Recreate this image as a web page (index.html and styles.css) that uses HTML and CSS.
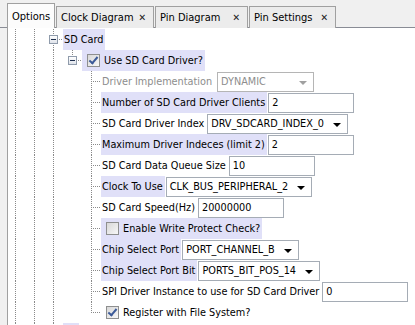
FILE: index.html
```html
<!DOCTYPE html>
<html lang="en">
<head>
    <meta charset="UTF-8">
    <meta name="viewport" content="width=device-width, initial-scale=1.0">
    <title>Options</title>
    <link rel="stylesheet" href="styles.css">
</head>
<body>
    <div id="main">
        <div class="tabs">
            <div class="tab active">Options</div>
            <div class="tab t-clock">Clock Diagram <span class="close">&#x2715;</span></div>
            <div class="tab t-pin">Pin Diagram <span class="close">&#x2715;</span></div>
            <div class="tab t-set">Pin Settings <span class="close">&#x2715;</span></div>
        </div>

        <div class="panel">
            <div class="tree">
                <!-- SD Card node -->
                <div class="row">
                    <span class="g v"></span><span class="g v"></span>
                    <span class="g exp"><i class="box"></i></span>
                    <span class="label hl">SD Card</span>
                </div>

                <!-- Use SD Card Driver -->
                <div class="row">
                    <span class="g v"></span><span class="g v"></span><span class="g v"></span>
                    <span class="g exp last"><i class="box"></i></span>
                    <span class="label hl check"><i class="cb on"></i>Use SD Card Driver?</span>
                </div>

                <div class="row">
                    <span class="g v"></span><span class="g v"></span><span class="g v"></span><span class="g"></span><span class="g t"></span>
                    <span class="label dim">Driver Implementation</span>
                    <div class="combo disabled w-impl">DYNAMIC</div>
                </div>

                <div class="row">
                    <span class="g v"></span><span class="g v"></span><span class="g v"></span><span class="g"></span><span class="g t"></span>
                    <span class="label hl">Number of SD Card Driver Clients</span>
                    <div class="field">2</div>
                </div>

                <div class="row">
                    <span class="g v"></span><span class="g v"></span><span class="g v"></span><span class="g"></span><span class="g t"></span>
                    <span class="label">SD Card Driver Index</span>
                    <div class="combo">DRV_SDCARD_INDEX_0</div>
                </div>

                <div class="row">
                    <span class="g v"></span><span class="g v"></span><span class="g v"></span><span class="g"></span><span class="g t"></span>
                    <span class="label hl">Maximum Driver Indeces (limit 2)</span>
                    <div class="field">2</div>
                </div>

                <div class="row">
                    <span class="g v"></span><span class="g v"></span><span class="g v"></span><span class="g"></span><span class="g t"></span>
                    <span class="label">SD Card Data Queue Size</span>
                    <div class="field">10</div>
                </div>

                <div class="row">
                    <span class="g v"></span><span class="g v"></span><span class="g v"></span><span class="g"></span><span class="g t"></span>
                    <span class="label hl">Clock To Use</span>
                    <div class="combo">CLK_BUS_PERIPHERAL_2</div>
                </div>

                <div class="row">
                    <span class="g v"></span><span class="g v"></span><span class="g v"></span><span class="g"></span><span class="g t"></span>
                    <span class="label">SD Card Speed(Hz)</span>
                    <div class="field">20000000</div>
                </div>

                <div class="row">
                    <span class="g v"></span><span class="g v"></span><span class="g v"></span><span class="g"></span><span class="g t"></span>
                    <span class="label hl check"><i class="cb"></i>Enable Write Protect Check?</span>
                </div>

                <div class="row">
                    <span class="g v"></span><span class="g v"></span><span class="g v"></span><span class="g"></span><span class="g t"></span>
                    <span class="label hl">Chip Select Port</span>
                    <div class="combo">PORT_CHANNEL_B</div>
                </div>

                <div class="row">
                    <span class="g v"></span><span class="g v"></span><span class="g v"></span><span class="g"></span><span class="g t"></span>
                    <span class="label hl">Chip Select Port Bit</span>
                    <div class="combo">PORTS_BIT_POS_14</div>
                </div>

                <div class="row">
                    <span class="g v"></span><span class="g v"></span><span class="g v"></span><span class="g"></span><span class="g t"></span>
                    <span class="label">SPI Driver Instance to use for SD Card Driver</span>
                    <div class="field">0</div>
                </div>

                <div class="row">
                    <span class="g v"></span><span class="g v"></span><span class="g v"></span><span class="g"></span><span class="g l"></span>
                    <span class="label check"><i class="cb on"></i>Register with File System?</span>
                </div>

                <!-- next sibling, cut off at the bottom -->
                <div class="row">
                    <span class="g v"></span><span class="g v"></span><span class="g t"></span>
                    <span class="label hl stub"></span>
                </div>
            </div>
        </div>
    </div>
</body>
</html>
```

FILE: styles.css
```css
*{
    margin: 0;
    padding: 0;
    box-sizing: border-box;
}

body{
    background-color: #ffffff;
    font-family: "DejaVu Sans Condensed", "DejaVu Sans", sans-serif;
    font-stretch: condensed;
    font-size: 10.8px;
    color: #000000;
    overflow: hidden;
}

#main{
    width: 415px;
    height: 325px;
    display: flex;
    flex-direction: column;
    background-color: #f0f0f0;
}

/* tab strip */
.tabs{
    height: 28px;
    display: flex;
    align-items: flex-end;
    padding-left: 7px;
    gap: 1px;
    border-bottom: 1px solid #898c95;
    font-size: 11px;
}

.tab{
    height: 22px;
    margin-bottom: -1px;
    padding: 0 0 0 4px;
    display: flex;
    align-items: center;
    border: 1px solid #a0a0a0;
    border-bottom: none;
    background-color: #ececec;
    white-space: nowrap;
}

.tab.active{
    height: 25px;
    width: 48px;
    background-color: #fcfcfc;
    position: relative;
    z-index: 1;
}

.t-clock{ width: 98px; }
.t-pin{ width: 93px; }
.t-set{ width: 87px; }

.close{
    margin-left: auto;
    margin-right: 7px;
    font-size: 10px;
    font-weight: bold;
    color: #202020;
}

/* content */
.panel{
    flex: 1;
    background-color: #ffffff;
    border-left: 1px solid #a0a0a0;
    margin-left: 7px;
    overflow: hidden;
}

.tree{
    padding-top: 1px;
    margin-left: -2px;
}

.row{
    height: 21px;
    display: flex;
    align-items: center;
    white-space: nowrap;
}

/* tree guides */
.g{
    width: 19px;
    height: 21px;
    flex: none;
    position: relative;
}

.g.v::before,
.g.t::before,
.g.l::before,
.g.exp::before{
    content: '';
    position: absolute;
    left: 9px;
    top: 0;
    width: 1px;
    height: 21px;
    background: repeating-linear-gradient(to bottom, #8a8a8a 0 1px, transparent 1px 2px);
}

.g.l::before,
.g.exp.last::before{
    height: 11px;
}

.g.t::after,
.g.l::after,
.g.exp::after{
    content: '';
    position: absolute;
    left: 11px;
    top: 10px;
    width: 8px;
    height: 1px;
    background: repeating-linear-gradient(to right, #8a8a8a 0 1px, transparent 1px 2px);
}

.box{
    position: absolute;
    left: 5px;
    top: 6px;
    width: 9px;
    height: 9px;
    z-index: 1;
    border: 1px solid #8f9bab;
    background: linear-gradient(to bottom, #ffffff, #dfe3ea);
}

.box::after{
    content: '';
    position: absolute;
    left: 1px;
    top: 3px;
    width: 5px;
    height: 1px;
    background-color: #1e2f4e;
}

/* labels */
.label{
    height: 21px;
    line-height: 21px;
    padding: 0 2px 0 1px;
    display: flex;
    align-items: center;
}

.hl{
    background-color: #e0e0f8;
}

.dim{
    color: #8d8d8d;
    padding-right: 4px;
}

.check{
    padding-left: 5px;
}

.stub{
    width: 16px;
}

.cb{
    width: 13px;
    height: 13px;
    margin-right: 4px;
    border: 1px solid #8e8f8f;
    background: linear-gradient(135deg, #d8d8d8, #f7f7f7);
    position: relative;
}

.cb.on::after{
    content: '';
    position: absolute;
    left: 3px;
    top: 0px;
    width: 3px;
    height: 7px;
    border-right: 2px solid #3c5a98;
    border-bottom: 2px solid #3c5a98;
    transform: rotate(40deg);
    transform-origin: center;
}

/* editors */
.field,
.combo{
    height: 20px;
    line-height: 18px;
    margin-left: 1px;
    padding-left: 3px;
    border: 1px solid #a5acb5;
    background-color: #ffffff;
}

.field{
    width: 86px;
}

.combo{
    position: relative;
    padding-right: 23px;
}

.combo::after{
    content: '';
    position: absolute;
    right: 6px;
    top: 8px;
    border-left: 4px solid transparent;
    border-right: 4px solid transparent;
    border-top: 4px solid #000000;
}

.combo.disabled{
    color: #8d8d8d;
    border-color: #b5b5b5;
}

.combo.disabled::after{
    border-top-color: #a0a0a0;
}

.w-impl{ width: 97px; }
```
